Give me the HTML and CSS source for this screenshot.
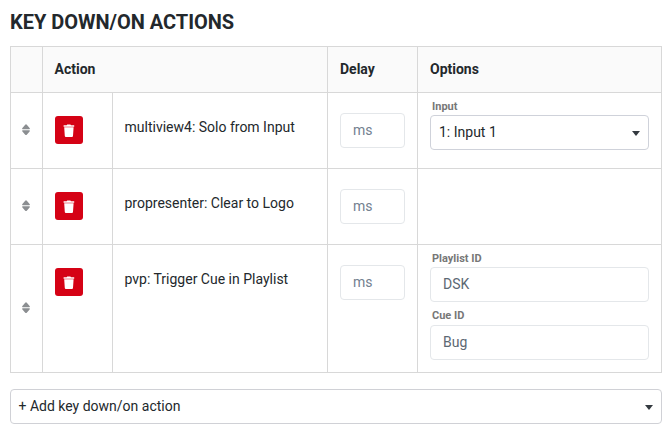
FILE: index.html
```html
<!DOCTYPE html>
<html lang="en">
<head>
<meta charset="utf-8">
<title>Key down/on actions</title>
<link rel="stylesheet" href="styles.css">
</head>
<body>
<svg class="defs" aria-hidden="true">
  <symbol id="sort" viewBox="0 0 8 12"><path d="M4 .2Q4.500 .3 5 .9L7.600 3.900Q8.300 5.200 7.400 5.200H.6Q-.3 5.200 .4 3.900L3 .9Q3.500 .3 4 .2ZM.6 6.300H7.400Q8.300 6.300 7.600 7.400L5 10.500Q4 11.600 3 10.500L.4 7.400Q-.3 6.300 .6 6.300Z"/></symbol>
  <symbol id="trash" viewBox="0 0 12 14"><path d="M.6 1.200H3.600L4.200 .4H7.400L8 1.200H11.200V2.700H.6ZM1.200 3.200H10.600L10 12Q9.900 13 8.900 13H2.900Q1.900 13 1.800 12Z"/></symbol>
</svg>
<h4>KEY DOWN/ON ACTIONS</h4>
<div class="table">
  <div class="head"></div>
  <div class="head wide">Action</div>
  <div class="head">Delay</div>
  <div class="head">Options</div>

  <div class="handle"><svg><use href="#sort"/></svg></div>
  <div class="remove"><button class="btn" aria-label="Delete"><svg><use href="#trash"/></svg></button></div>
  <div class="name">multiview4: Solo from Input</div>
  <div class="delay"><div class="input placeholder">ms</div></div>
  <div class="options">
    <div class="label">Input</div>
    <div class="select"><span>1: Input 1</span><i class="caret"></i></div>
  </div>

  <div class="handle"><svg><use href="#sort"/></svg></div>
  <div class="remove"><button class="btn" aria-label="Delete"><svg><use href="#trash"/></svg></button></div>
  <div class="name">propresenter: Clear to Logo</div>
  <div class="delay"><div class="input placeholder">ms</div></div>
  <div class="options"></div>

  <div class="handle"><svg><use href="#sort"/></svg></div>
  <div class="remove"><button class="btn" aria-label="Delete"><svg><use href="#trash"/></svg></button></div>
  <div class="name">pvp: Trigger Cue in Playlist</div>
  <div class="delay"><div class="input placeholder">ms</div></div>
  <div class="options">
    <div class="label">Playlist ID</div>
    <div class="input">DSK</div>
    <div class="label">Cue ID</div>
    <div class="input">Bug</div>
  </div>
</div>
<div class="select add"><span>+ Add key down/on action</span><i class="caret"></i></div>
</body>
</html>
```
FILE: styles.css
```css
* { box-sizing: border-box; }
body {
  margin: 0;
  padding: 10px 10px 0;
  background: #fff;
  color: #23282c;
  font: 14px/21px Roboto, "Liberation Sans", sans-serif;
}
.defs { display: none; }
h4 {
  margin: 0 0 12px;
  font-size: 20px;
  line-height: 24px;
  font-weight: 700;
  letter-spacing: -0.02px;
}
.table {
  display: grid;
  width: 652px;
  grid-template-columns: 31px 69px 214px 89px 243px;
  grid-template-rows: 45px 75px 75px 127px;
  gap: 1px;
  border: 1px solid #d8d8d8;
  background: #d8d8d8;
}
.table > div { background: #fff; padding: 0 12px; }
.table > .head {
  background: #fafafa;
  font-weight: 700;
  line-height: 45px;
}
.table > .wide { grid-column: span 2; padding-left: 11.5px; }
.table > .handle {
  display: flex;
  align-items: center;
  justify-content: center;
  padding: 0 1px 1px 0;
}
.handle svg { width: 8px; height: 12px; fill: #8b8e91; }
.table > .remove { padding-top: 23px; }
.btn {
  display: flex;
  align-items: center;
  justify-content: center;
  width: 28px;
  height: 28px;
  padding: 2px 0 0;
  border: 0;
  border-radius: 3px;
  background: #d50215;
}
.btn svg { width: 12px; height: 14px; fill: #fff; }
.table > .name { padding-top: 24px; padding-left: 11.5px; }
.table > .delay { padding-top: 20px; }
.input {
  height: 35px;
  padding: 0 12px;
  border: 1px solid #e4e7ea;
  border-radius: 4px;
  color: #5c6873;
  line-height: 33px;
}
.placeholder { color: #73818f; }
.table > .options { padding-top: 5px; }
.label {
  height: 17px;
  padding-left: 2px;
  color: #777;
  font-size: 11px;
  line-height: 17px;
  font-weight: 700;
}
.input + .label { height: 23px; line-height: 28px; }
.select {
  display: flex;
  align-items: center;
  justify-content: space-between;
  height: 35px;
  padding: 0 8px;
  border: 1px solid #cfd2da;
  border-radius: 4px;
  background: #fff;
}
.caret {
  margin-top: 2px;
  border: 4px solid transparent;
  border-top: 5px solid #343a40;
  border-bottom: 0;
}
.add { width: 652px; margin-top: 16px; padding-left: 7.5px; border-color: #d0d1d6; }
```
